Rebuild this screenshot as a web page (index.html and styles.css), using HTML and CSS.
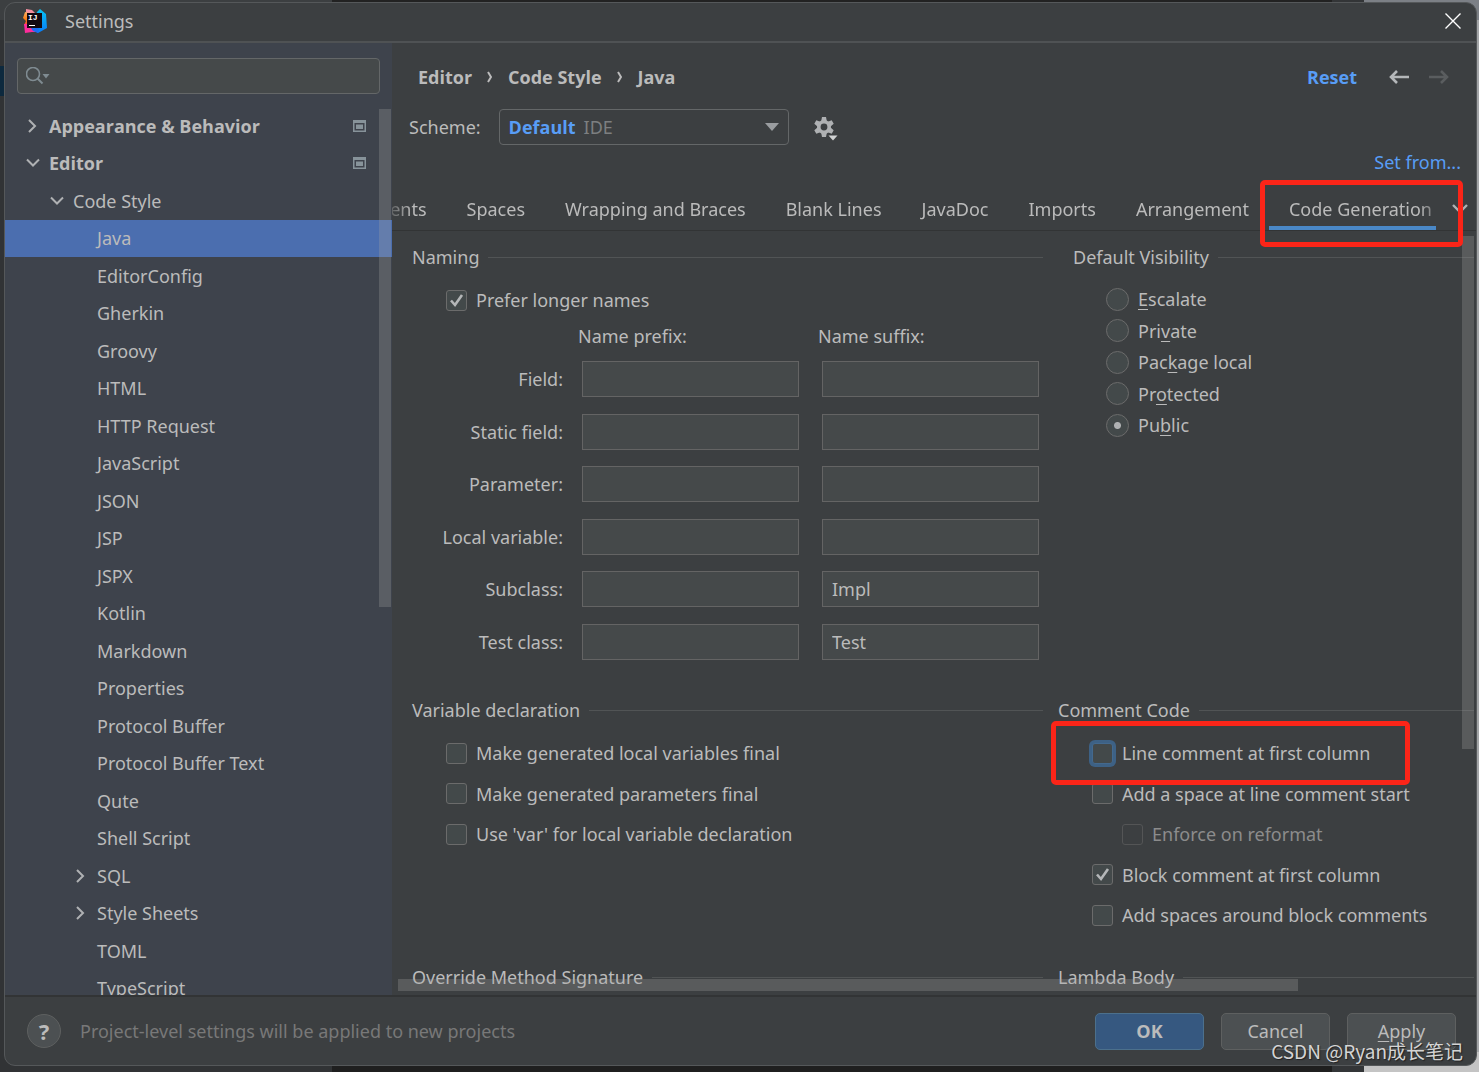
FILE: index.html
```html
<!DOCTYPE html>
<html lang="en">

<head>
    <meta charset="utf-8">
    <title>Settings</title>
    <link rel="stylesheet" href="styles.css">
</head>

<body>
    <div class="window">
        <header class="title-bar">
            <svg class="app-icon" width="24" height="24" viewBox="0 0 24 24">
                <defs>
                    <linearGradient id="warm" x1="0" y1="0" x2="0" y2="1">
                        <stop offset="0" stop-color="#fdb060"></stop>
                        <stop offset="0.45" stop-color="#f97a12"></stop>
                        <stop offset="1" stop-color="#fe2857"></stop>
                    </linearGradient>
                    <linearGradient id="cool" x1="0" y1="0" x2="0" y2="1">
                        <stop offset="0" stop-color="#07c3f2"></stop>
                        <stop offset="1" stop-color="#087cfa"></stop>
                    </linearGradient>
                </defs>
                <path fill="#f58fa0" d="M3 0l6 1 4 4-10 6z"></path>
                <path fill="url(#warm)" d="M2 3l8 2-5 15-4-4 2-4-3-3z"></path>
                <path fill="#fe2d9b" d="M1 15l5 0 7 8H9l-7 1z"></path>
                <path fill="url(#cool)" d="M14 3l3-3 6 5 1 14-9 5-6-4z"></path>
                <path fill="#1c6df5" d="M8 19l8-1-1 6-5-2z"></path>
                <rect x="4" y="4" width="15" height="15" fill="#120a12"></rect>
                <text class="app-letters" x="5" y="11">IJ</text>
                <rect x="6" y="16" width="6" height="1" fill="#fff"></rect>
            </svg>
            <h1>Settings</h1>
            <button class="icon-button close" aria-label="Close">
                <svg width="16" height="16" viewBox="0 0 16 16" fill="none" stroke="#fff" stroke-width="1.4">
                    <path d="M0.5 0.5l15 15M15.500 0.5l-15 15"></path>
                </svg>
            </button>
        </header>

        <div class="body">
            <aside class="sidebar">
                <div class="search-box">
                    <svg class="search-icon" width="24" height="18" viewBox="0 0 24 18">
                        <circle cx="7" cy="7" r="6.500" fill="none" stroke="#7f8b91" stroke-width="1.6"></circle>
                        <path d="M11.500 11.500L16.500 16.500" stroke="#7f8b91" stroke-width="2"></path>
                        <path d="M16.500 7h7l-3.500 4.500z" fill="#7f8b91"></path>
                    </svg>
                    <input type="text" aria-label="Search settings">
                </div>
                <ul class="tree">
                    <li class="bold">
                        <svg class="arrow" viewBox="0 0 22 22"><path d="M7 5l6 6-6 6"></path></svg>
                        <a href="#">Appearance &amp; Behavior</a>
                        <svg class="project-mark" viewBox="0 0 13 12"><path d="M0 0h13v12H0zM1.500 3v7.500h10V3z"></path><path d="M3 4.500h7v4.500H3z"></path></svg>
                    </li>
                    <li class="bold">
                        <svg class="arrow" viewBox="0 0 22 22"><path d="M5 7.500l6 6 6-6"></path></svg>
                        <a href="#">Editor</a>
                        <svg class="project-mark" viewBox="0 0 13 12"><path d="M0 0h13v12H0zM1.500 3v7.500h10V3z"></path><path d="M3 4.500h7v4.500H3z"></path></svg>
                    </li>
                    <li class="level-1">
                        <svg class="arrow" viewBox="0 0 22 22"><path d="M5 7.500l6 6 6-6"></path></svg>
                        <a href="#">Code Style</a>
                    </li>
                    <li class="leaf selected"><a href="#">Java</a></li>
                    <li class="leaf"><a href="#">EditorConfig</a></li>
                    <li class="leaf"><a href="#">Gherkin</a></li>
                    <li class="leaf"><a href="#">Groovy</a></li>
                    <li class="leaf"><a href="#">HTML</a></li>
                    <li class="leaf"><a href="#">HTTP Request</a></li>
                    <li class="leaf"><a href="#">JavaScript</a></li>
                    <li class="leaf"><a href="#">JSON</a></li>
                    <li class="leaf"><a href="#">JSP</a></li>
                    <li class="leaf"><a href="#">JSPX</a></li>
                    <li class="leaf"><a href="#">Kotlin</a></li>
                    <li class="leaf"><a href="#">Markdown</a></li>
                    <li class="leaf"><a href="#">Properties</a></li>
                    <li class="leaf"><a href="#">Protocol Buffer</a></li>
                    <li class="leaf"><a href="#">Protocol Buffer Text</a></li>
                    <li class="leaf"><a href="#">Qute</a></li>
                    <li class="leaf"><a href="#">Shell Script</a></li>
                    <li class="level-2">
                        <svg class="arrow" viewBox="0 0 22 22"><path d="M7 5l6 6-6 6"></path></svg>
                        <a href="#">SQL</a>
                    </li>
                    <li class="level-2">
                        <svg class="arrow" viewBox="0 0 22 22"><path d="M7 5l6 6-6 6"></path></svg>
                        <a href="#">Style Sheets</a>
                    </li>
                    <li class="leaf"><a href="#">TOML</a></li>
                    <li class="leaf"><a href="#">TypeScript</a></li>
                </ul>
                <div class="thumb tree-thumb"></div>
            </aside>

            <main class="content">
                <div class="page-header">
                    <nav class="breadcrumbs">
                        <a href="#">Editor</a>
                        <svg width="6" height="12" viewBox="0 0 6 12"><path d="M1 1l3 5-3 5"></path></svg>
                        <a href="#">Code Style</a>
                        <svg width="6" height="12" viewBox="0 0 6 12"><path d="M1 1l3 5-3 5"></path></svg>
                        <a href="#">Java</a>
                    </nav>
                    <a class="link reset" href="#">Reset</a>
                    <button class="icon-button" aria-label="Back">
                        <svg width="20" height="14" viewBox="0 0 20 14" fill="none" stroke="#b4b7b9" stroke-width="2.6"><path d="M8 1L2 7l6 6M2 7h18"></path></svg>
                    </button>
                    <button class="icon-button" aria-label="Forward" disabled>
                        <svg width="20" height="14" viewBox="0 0 20 14" fill="none" stroke="#5a5d5f" stroke-width="2.6"><path d="M12 1l6 6-6 6M18 7H0"></path></svg>
                    </button>
                </div>

                <div class="scheme-row">
                    <label for="scheme">Scheme:</label>
                    <div class="scheme-select">
                        <select id="scheme">
                            <option>Default</option>
                        </select>
                        <span class="scheme-scope">IDE</span>
                        <svg class="select-arrow" width="14" height="8" viewBox="0 0 14 8"><path d="M0 0h14L7 8z" fill="#9a9da0"></path></svg>
                    </div>
                    <button class="icon-button" aria-label="Scheme actions">
                        <svg width="24" height="24" viewBox="0 0 24 24">
                            <g fill="#afb1b3">
                                <path fill-rule="evenodd" d="M10 3a7 7 0 1 0 0 14a7 7 0 1 0 0-14zM10 6.600a3.400 3.400 0 1 1 0 6.800a3.400 3.400 0 1 1 0-6.800z"></path>
                                <path d="M8 0h4l1 5H7zM8 20h4l1-5H7z"></path>
                                <path d="M0.300 6.700l2-3.500 4.700 1.700-3 5.200zM19.700 13.300l-2 3.500-4.700-1.700 3-5.200z"></path>
                                <path d="M19.700 6.700l-2-3.500-4.700 1.700 3 5.200zM0.300 13.300l2 3.500 4.700-1.700-3-5.200z"></path>
                            </g>
                            <path d="M14.500 18.500h9l-4.500 5z" fill="#d0d2d3"></path>
                        </svg>
                    </button>
                </div>

                <div class="set-from"><a class="link" href="#">Set from...</a></div>

                <div class="tab-bar">
                    <div class="tab-strip">
                        <div class="tabs" role="tablist">
                            <button role="tab">Tabs and Indents</button>
                            <button role="tab">Spaces</button>
                            <button role="tab">Wrapping and Braces</button>
                            <button role="tab">Blank Lines</button>
                            <button role="tab">JavaDoc</button>
                            <button role="tab">Imports</button>
                            <button role="tab">Arrangement</button>
                            <button role="tab" class="active" aria-selected="true">Code Generation</button>
                        </div>
                    </div>
                    <button class="icon-button more-tabs" aria-label="More tabs">
                        <svg width="16" height="10" viewBox="0 0 16 10" fill="none" stroke="#afb1b3" stroke-width="2.400"><path d="M1 1l7 7 7-7"></path></svg>
                    </button>
                    <div class="highlight highlight-tab"></div>
                </div>

                <div class="viewport">
                    <div class="groups">
                        <section>
                            <h2>Naming</h2>
                            <label class="option"><input type="checkbox" checked>Prefer longer names</label>
                            <div class="naming">
                                <span></span><span>Name prefix:</span><span>Name suffix:</span>
                                <label for="field">Field:</label>
                                <input type="text" id="field">
                                <input type="text" aria-label="Field suffix">
                                <label for="static-field">Static field:</label>
                                <input type="text" id="static-field">
                                <input type="text" aria-label="Static field suffix">
                                <label for="parameter">Parameter:</label>
                                <input type="text" id="parameter">
                                <input type="text" aria-label="Parameter suffix">
                                <label for="local-variable">Local variable:</label>
                                <input type="text" id="local-variable">
                                <input type="text" aria-label="Local variable suffix">
                                <label for="subclass">Subclass:</label>
                                <input type="text" id="subclass">
                                <input type="text" aria-label="Subclass suffix" value="Impl">
                                <label for="test-class">Test class:</label>
                                <input type="text" id="test-class">
                                <input type="text" aria-label="Test class suffix" value="Test">
                            </div>
                        </section>

                        <section class="visibility">
                            <h2>Default Visibility</h2>
                            <div class="radios">
                                <label class="option"><input type="radio" name="visibility"><span><u>E</u>scalate</span></label>
                                <label class="option"><input type="radio" name="visibility"><span>Pri<u>v</u>ate</span></label>
                                <label class="option"><input type="radio" name="visibility"><span>Pac<u>k</u>age local</span></label>
                                <label class="option"><input type="radio" name="visibility"><span>Pr<u>o</u>tected</span></label>
                                <label class="option"><input type="radio" name="visibility" checked><span>Pu<u>b</u>lic</span></label>
                            </div>
                        </section>

                        <section>
                            <h2>Variable declaration</h2>
                            <div class="checks">
                                <label class="option"><input type="checkbox">Make generated local variables final</label>
                                <label class="option"><input type="checkbox">Make generated parameters final</label>
                                <label class="option"><input type="checkbox">Use 'var' for local variable declaration</label>
                            </div>
                        </section>

                        <section class="comment-code">
                            <h2>Comment Code</h2>
                            <div class="checks">
                                <label class="option"><input type="checkbox" class="focused">Line comment at first column</label>
                                <label class="option"><input type="checkbox">Add a space at line comment start</label>
                                <label class="option nested"><input type="checkbox" disabled>Enforce on reformat</label>
                                <label class="option"><input type="checkbox" checked>Block comment at first column</label>
                                <label class="option"><input type="checkbox">Add spaces around block comments</label>
                            </div>
                            <div class="highlight highlight-comment"></div>
                        </section>

                        <section>
                            <h2>Override Method Signature</h2>
                        </section>

                        <section>
                            <h2>Lambda Body</h2>
                        </section>
                    </div>
                    <div class="thumb page-thumb"></div>
                    <div class="thumb page-thumb-x"></div>
                </div>
            </main>
        </div>

        <footer class="footer">
            <button class="help" aria-label="Help">?</button>
            <p>Project-level settings will be applied to new projects</p>
            <button class="button primary">OK</button>
            <button class="button">Cancel</button>
            <button class="button"><span><u>A</u>pply</span></button>
        </footer>
    </div>
    <div class="watermark">CSDN @Ryan成长笔记</div>
</body>

</html>
```
FILE: styles.css
```css
* {
    box-sizing: border-box;
}

body {
    margin: 0;
    height: 100vh;
    padding: 2px 2px 6px 4px;
    overflow: hidden;
    font-family: "Noto Sans", "Open Sans", "Noto Sans CJK SC", sans-serif;
    font-size: 18px;
    line-height: 28px;
    color: #bbbbbb;
    /* windows that stay visible round the dialog */
    background:
        linear-gradient(#0d293e, #0d293e) 0 66px / 5px 30px no-repeat,
        linear-gradient(90deg, #3c3f41 332px, #222222 332px, #222222 1332px, #333537 1332px, #333537 1364px, #7c8086 1364px) 0 0 / 100% 20px no-repeat,
        linear-gradient(90deg, #313335 332px, #1f1f1f 332px, #1f1f1f 1332px, #333537 1332px, #333537 1364px, #c4c4c4 1364px) 0 100% / 100% 20px no-repeat,
        linear-gradient(90deg, #313335 50%, #a4a6a8 50%);
}

input,
select,
button {
    font: inherit;
    color: inherit;
    margin: 0;
}

a {
    color: inherit;
    text-decoration: none;
}

h1,
h2 {
    margin: 0;
    font-size: 18px;
    font-weight: 400;
}

u {
    text-decoration: underline;
    text-underline-offset: 3px;
}

.window {
    height: 100%;
    display: flex;
    flex-direction: column;
    overflow: hidden;
    background: #3c3f41;
    border: 1px solid #55585a;
    border-radius: 11px;
}

.title-bar {
    flex: none;
    height: 40px;
    display: flex;
    align-items: center;
    gap: 18px;
    padding: 0 15px 2px 18px;
    border-bottom: 2px solid #4f5254;
}

.title-bar h1 {
    flex: 1;
}

.app-letters {
    font: bold 8px "Liberation Mono", monospace;
    fill: #ffffff;
}

.icon-button {
    display: flex;
    padding: 0;
    border: none;
    background: none;
    cursor: pointer;
}

.body {
    flex: 1;
    min-height: 0;
    display: flex;
}

/* sidebar */

.sidebar {
    position: relative;
    flex: none;
    width: 387px;
    padding-top: 15px;
    overflow: hidden;
    background: #3e434c;
}

.search-box {
    display: flex;
    align-items: center;
    height: 36px;
    margin: 0 12px 13px;
    padding-left: 8px;
    background: #45494a;
    border: 1px solid #646768;
    border-radius: 4px;
}

.search-box input {
    flex: 1;
    min-width: 0;
    background: none;
    border: none;
    outline: none;
}

.tree {
    display: grid;
    grid-auto-rows: 1fr;
    height: 900px;
    margin: 0;
    padding: 0;
    list-style: none;
}

.tree li {
    display: flex;
    align-items: center;
    padding: 0 26px 0 17px;
}

.tree a {
    flex: 1;
}

.tree .bold,
.page-header,
.scheme-select select,
.button.primary {
    font-family: "Open Sans", sans-serif;
    font-weight: 700;
}

.tree .level-1 {
    padding-left: 41px;
}

.tree .level-2 {
    padding-left: 65px;
}

.tree .leaf {
    padding-left: 92px;
}

.tree .selected {
    background: #4b6eaf;
}

.arrow {
    width: 22px;
    height: 22px;
    margin-right: 5px;
    fill: none;
    stroke: #afb1b3;
    stroke-width: 2;
}

.project-mark {
    width: 13px;
    height: 12px;
    fill: #87939a;
    fill-rule: evenodd;
}

.thumb {
    position: absolute;
    width: 12px;
    background: rgba(166, 166, 166, 0.28);
}

.tree-thumb {
    top: 66px;
    right: 1px;
    height: 498px;
}

/* page */

.content {
    flex: 1;
    min-width: 0;
    display: flex;
    flex-direction: column;
    padding-top: 16px;
}

.page-header {
    display: flex;
    align-items: center;
    gap: 20px;
    height: 36px;
    padding: 0 27px 0 26px;
}

.breadcrumbs {
    flex: 1;
    display: flex;
    align-items: center;
    gap: 15px;
}

.breadcrumbs svg {
    fill: none;
    stroke: #bbbbbb;
    stroke-width: 2;
}

.link {
    color: #589df6;
}

.reset {
    margin-right: 12px;
}

.scheme-row {
    display: flex;
    align-items: center;
    gap: 18px;
    margin-top: 14px;
    padding-left: 17px;
}

.scheme-select {
    position: relative;
    width: 290px;
}

.scheme-select select {
    display: block;
    width: 100%;
    height: 36px;
    padding: 0 9px;
    appearance: none;
    background: #3c3f41;
    border: 1px solid #646768;
    border-radius: 4px;
    color: #589df6;
}

.scheme-scope {
    position: absolute;
    top: 4px;
    left: 85px;
    color: #7d7f80;
    pointer-events: none;
}

.select-arrow {
    position: absolute;
    top: 14px;
    right: 10px;
    pointer-events: none;
}

.scheme-row .icon-button {
    margin-left: 7px;
    padding-top: 4px;
}

.set-from {
    height: 42px;
    padding: 3px 15px 0;
    text-align: right;
}

.tab-bar {
    position: relative;
    display: flex;
    align-items: center;
    border-bottom: 1px solid #323435;
}

.tab-strip {
    flex: 1;
    min-width: 0;
    overflow: hidden;
    -webkit-mask-image: linear-gradient(90deg, rgba(0, 0, 0, 0.3), #000 20px);
    mask-image: linear-gradient(90deg, rgba(0, 0, 0, 0.3), #000 20px);
}

/* scrolled to its last tab */
.tabs {
    display: flex;
    justify-content: flex-end;
    margin-right: -16px;
}

.tabs button {
    flex: none;
    height: 43px;
    padding: 1px 20px 0;
    background: none;
    border: none;
    cursor: pointer;
}

.tabs .active {
    border-bottom: 4px solid #4a88c7;
    padding-top: 5px;
    -webkit-mask-image: linear-gradient(#000, #000), linear-gradient(90deg, #000 150px, rgba(0, 0, 0, 0.4) 166px);
    -webkit-mask-size: 100% 4px, 100% 39px;
    -webkit-mask-position: 0 100%, 0 0;
    -webkit-mask-repeat: no-repeat;
}

.more-tabs {
    padding: 0 8px 0 16px;
}

.highlight {
    position: absolute;
    border: 5px solid #fb2518;
    border-radius: 5px;
    pointer-events: none;
}

.highlight-tab {
    top: -7px;
    right: 13px;
    width: 203px;
    height: 67px;
    z-index: 1;
}

.viewport {
    position: relative;
    flex: 1;
    min-height: 0;
    overflow: hidden;
}

.groups {
    display: grid;
    grid-template-columns: 631fr 416fr;
    column-gap: 15px;
    padding: 12px 2px 0 20px;
}

h2 {
    display: flex;
    align-items: center;
    gap: 9px;
    margin-bottom: 15px;
    line-height: 28px;
}

h2::after {
    content: "";
    flex: 1;
    height: 1px;
    background: #515455;
}

.visibility {
    padding-left: 15px;
}

.option {
    display: flex;
    align-items: center;
    gap: 9px;
    padding-left: 34px;
}

.nested {
    padding-left: 64px;
    color: #8c8c8c;
}

input[type="checkbox"],
input[type="radio"] {
    appearance: none;
    flex: none;
    width: 21px;
    height: 21px;
    background: #43494a center no-repeat;
    border: 1px solid #6b6b6b;
    border-radius: 3px;
}

input[type="checkbox"]:checked {
    background-image: url("data:image/svg+xml,%3Csvg xmlns='http://www.w3.org/2000/svg' width='15' height='15' fill='none' stroke='%23b4b6b8' stroke-width='2.6'%3E%3Cpath d='M2 7.500l4 4.500L13 2'/%3E%3C/svg%3E");
}

input[type="checkbox"]:disabled {
    background-color: #3c3f41;
    border-color: #545556;
}

input[type="checkbox"].focused {
    border-color: #43698e;
    box-shadow: 0 0 0 3px #3d6185;
}

input[type="radio"] {
    width: 23px;
    height: 23px;
    border-radius: 50%;
}

input[type="radio"]:checked {
    background-image: radial-gradient(circle, #afb1b3 3px, transparent 4px);
}

.radios {
    display: flex;
    flex-direction: column;
    justify-content: space-between;
    height: 154px;
}

.visibility h2 {
    margin-bottom: 14px;
}

.visibility .option {
    padding-left: 33px;
}

.checks {
    display: grid;
    grid-template-rows: repeat(5, 28px);
    align-content: space-between;
    height: 190px;
    margin-bottom: 34px;
}

.naming {
    display: grid;
    grid-template-columns: 151px 1fr 1fr;
    grid-template-rows: 31px;
    grid-auto-rows: 1fr;
    column-gap: 15px;
    align-items: center;
    height: 346px;
    margin: 8px 0 28px;
}

.naming span {
    align-self: start;
}

.naming label {
    text-align: right;
}

.naming input {
    min-width: 0;
    height: 36px;
    margin: 0 4px;
    padding: 0 9px;
    background: #45494a;
    border: 1px solid #646464;
}

.comment-code {
    position: relative;
}

.highlight-comment {
    top: 25px;
    left: -7px;
    width: 359px;
    height: 64px;
}

.page-thumb {
    top: 5px;
    right: 2px;
    height: 513px;
}

.page-thumb-x {
    left: 6px;
    bottom: 4px;
    width: 83%;
    height: 12px;
}

/* footer */

.footer {
    flex: none;
    display: flex;
    align-items: center;
    gap: 17px;
    height: 70px;
    padding: 0 20px 0 22px;
    border-top: 2px solid #323435;
}

.footer p {
    flex: 1;
    margin: 0;
    padding-left: 2px;
    color: #787878;
}

.help {
    width: 34px;
    height: 34px;
    padding: 0;
    background: #4c5052;
    border: 1px solid #5e6060;
    border-radius: 50%;
    font-size: 22px;
    font-weight: 700;
}

.button {
    width: 109px;
    height: 37px;
    padding: 0;
    background: #4c5052;
    border: 1px solid #5e6060;
    border-radius: 5px;
    cursor: pointer;
}

.button.primary {
    background: #365880;
    border-color: #4c708c;
}

.watermark {
    position: absolute;
    right: 16px;
    bottom: 7px;
    font-family: "Noto Sans CJK SC", sans-serif;
    font-size: 19px;
    color: #d4d4d4;
    text-shadow: 1px 1px 1px #222222;
}
```
